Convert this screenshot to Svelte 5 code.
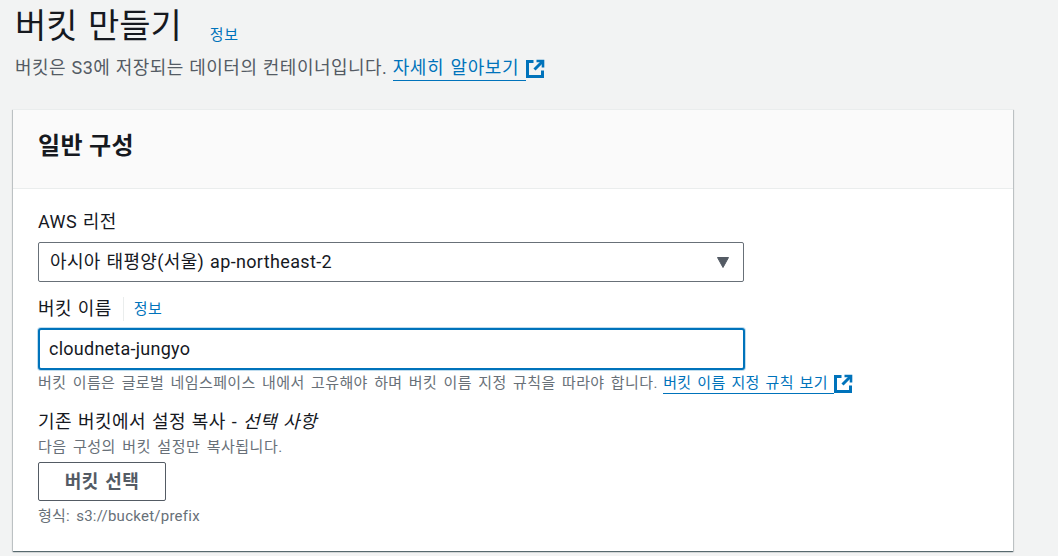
<script>
  let bucketName = $state("cloudneta-jungyo");
</script>

<div class="page">
  <header class="head">
    <div class="title-row">
      <h1>버킷 만들기</h1>
      <a class="info" href="#info">정보</a>
    </div>
    <p class="desc">
      버킷은 S3에 저장되는 데이터의 컨테이너입니다.
      <a class="ext" href="#more"><span>자세히 알아보기&nbsp;</span>{@render extIcon()}</a>
    </p>
  </header>

  <section class="card">
    <div class="card-head"><h2>일반 구성</h2></div>
    <div class="card-body">
      <div class="field region">
        <div class="label">AWS 리전</div>
        <div class="select">
          <span>아시아 태평양(서울) ap-northeast-2</span>
          <svg class="caret" width="12" height="11" viewBox="0 0 12 11"><path d="M0.5 0.5h11L6 10.5z" fill="#545b64" stroke="#545b64" stroke-linejoin="round" /></svg>
        </div>
      </div>

      <div class="field name">
        <div class="label-row">
          <span class="label">버킷 이름</span>
          <a class="info small" href="#info">정보</a>
        </div>
        <input class="input" bind:value={bucketName} />
        <p class="hint">
          버킷 이름은 글로벌 네임스페이스 내에서 고유해야 하며 버킷 이름 지정 규칙을 따라야 합니다.
          <a class="ext" href="#rules"><span>버킷 이름 지정 규칙 보기&nbsp;</span>{@render extIcon()}</a>
        </p>
      </div>

      <div class="field copy">
        <div class="label">기존 버킷에서 설정 복사 - <em>선택 사항</em></div>
        <p class="hint">다음 구성의 버킷 설정만 복사됩니다.</p>
        <button class="btn" type="button">버킷 선택</button>
        <p class="hint format">형식: s3://bucket/prefix</p>
      </div>
    </div>
  </section>
</div>

{#snippet extIcon()}
  <svg class="ext-icon" width="19" height="19" viewBox="0 0 19 19" fill="none" stroke="#0073bb" stroke-width="3">
    <path d="M7.5 2.5H1.5v15h15V11.5" />
    <path d="M10.5 2h6.5v6.5" stroke-width="2.6" />
    <path d="M16.5 2.5L8.5 10.5" />
  </svg>
{/snippet}

<style>
  :global(body) {
    margin: 0;
    background: #f2f3f3;
    font-family: Roboto, "Noto Sans CJK KR", sans-serif;
    color: #16191f;
  }
  .page {
    height: 556px;
    overflow: hidden;
    padding: 0 45px 0 13px;
    box-sizing: border-box;
  }
  .head {
    padding-left: 2px;
    height: 109px;
  }
  .title-row {
    display: flex;
    align-items: flex-end;
    gap: 28px;
    height: 48px;
    padding-top: 2px;
  }
  h1 {
    margin: 0;
    font-size: 34px;
    line-height: 48px;
    font-weight: 400;
    word-spacing: 2px;
  }
  .info {
    color: #0073bb;
    font-size: 15px;
    line-height: 20px;
    letter-spacing: 0.6px;
    text-decoration: none;
    margin-bottom: 5px;
  }
  .desc {
    margin: 6px 0 0;
    font-size: 18px;
    line-height: 24px;
    letter-spacing: 0.47px;
    word-spacing: 0.5px;
    color: #545b64;
  }
  .ext {
    color: #0073bb;
    text-decoration: none;
    display: inline-flex;
    align-items: center;
  }
  .desc .ext {
    word-spacing: 1.5px;
    letter-spacing: 0.55px;
  }
  .ext span {
    border-bottom: 1px solid #0073bb;
  }
  .card {
    background: #fff;
    box-shadow: 0 1px 1px 0 rgba(0, 28, 36, 0.5), 1px 1px 1px 0 rgba(0, 28, 36, 0.15), -1px 1px 1px 0 rgba(0, 28, 36, 0.15);
    height: 442px;
    border-top: 1px solid #eaeded;
    box-sizing: border-box;
  }
  .card-head {
    height: 79px;
    box-sizing: border-box;
    background: #fafafa;
    border-bottom: 1px solid #eaeded;
    padding: 21px 25px 0;
  }
  h2 {
    margin: 0;
    font-size: 24px;
    line-height: 30px;
    font-weight: 700;
    letter-spacing: 0.3px;
  }
  .card-body {
    padding: 22px 25px 0;
  }
  .label,
  .label-row {
    font-size: 18px;
    line-height: 22px;
    letter-spacing: 0.4px;
    word-spacing: 1px;
  }
  .select {
    width: 706px;
    height: 40px;
    margin-top: 9px;
    box-sizing: border-box;
    border: 1px solid #687078;
    border-radius: 2px;
    background: #fff;
    padding: 0 14px 5px 11px;
    font-size: 18px;
    letter-spacing: 0.35px;
    word-spacing: 1px;
    display: flex;
    align-items: center;
    justify-content: space-between;
  }
  .caret {
    margin-top: 5px;
  }
  .name {
    margin-top: 16px;
  }
  .label-row {
    display: flex;
    align-items: center;
    height: 22px;
  }
  .small {
    margin: 0 0 0 11px;
    padding-left: 10px;
    border-left: 1px solid #eaeded;
    line-height: 24px;
  }
  .input {
    display: block;
    width: 707px;
    height: 42px;
    margin-top: 8px;
    box-sizing: border-box;
    border: 2px solid #0073bb;
    border-radius: 3px;
    box-shadow: 0 0 0 1px rgba(0, 115, 187, 0.25);
    outline: none;
    padding: 0 9px 2px;
    font: inherit;
    font-size: 18px;
    letter-spacing: 0.25px;
    color: #16191f;
  }
  .hint {
    margin: 0;
    font-size: 15px;
    line-height: 20px;
    letter-spacing: 0.4px;
    word-spacing: 2.2px;
    color: #687078;
  }
  .hint .ext {
    word-spacing: 1.6px;
    letter-spacing: 0.4px;
    margin-left: -1px;
  }
  .name .hint {
    margin-top: 3px;
  }
  .copy {
    margin-top: 16px;
  }
  .copy .label {
    line-height: 24px;
    letter-spacing: 0.45px;
  }
  em {
    font-style: italic;
  }
  .copy .hint {
    margin-top: 3px;
    letter-spacing: 0.5px;
  }
  .btn {
    display: block;
    width: 128px;
    height: 39px;
    margin-top: 5px;
    padding: 0 0 4px;
    border: 1px solid #545b64;
    border-radius: 2px;
    background: #fff;
    color: #545b64;
    font: inherit;
    font-size: 18px;
    letter-spacing: 0.5px;
    word-spacing: 1.5px;
    font-weight: 700;
  }
  .copy .format {
    margin-top: 5px;
    letter-spacing: 0.25px;
  }
</style>
